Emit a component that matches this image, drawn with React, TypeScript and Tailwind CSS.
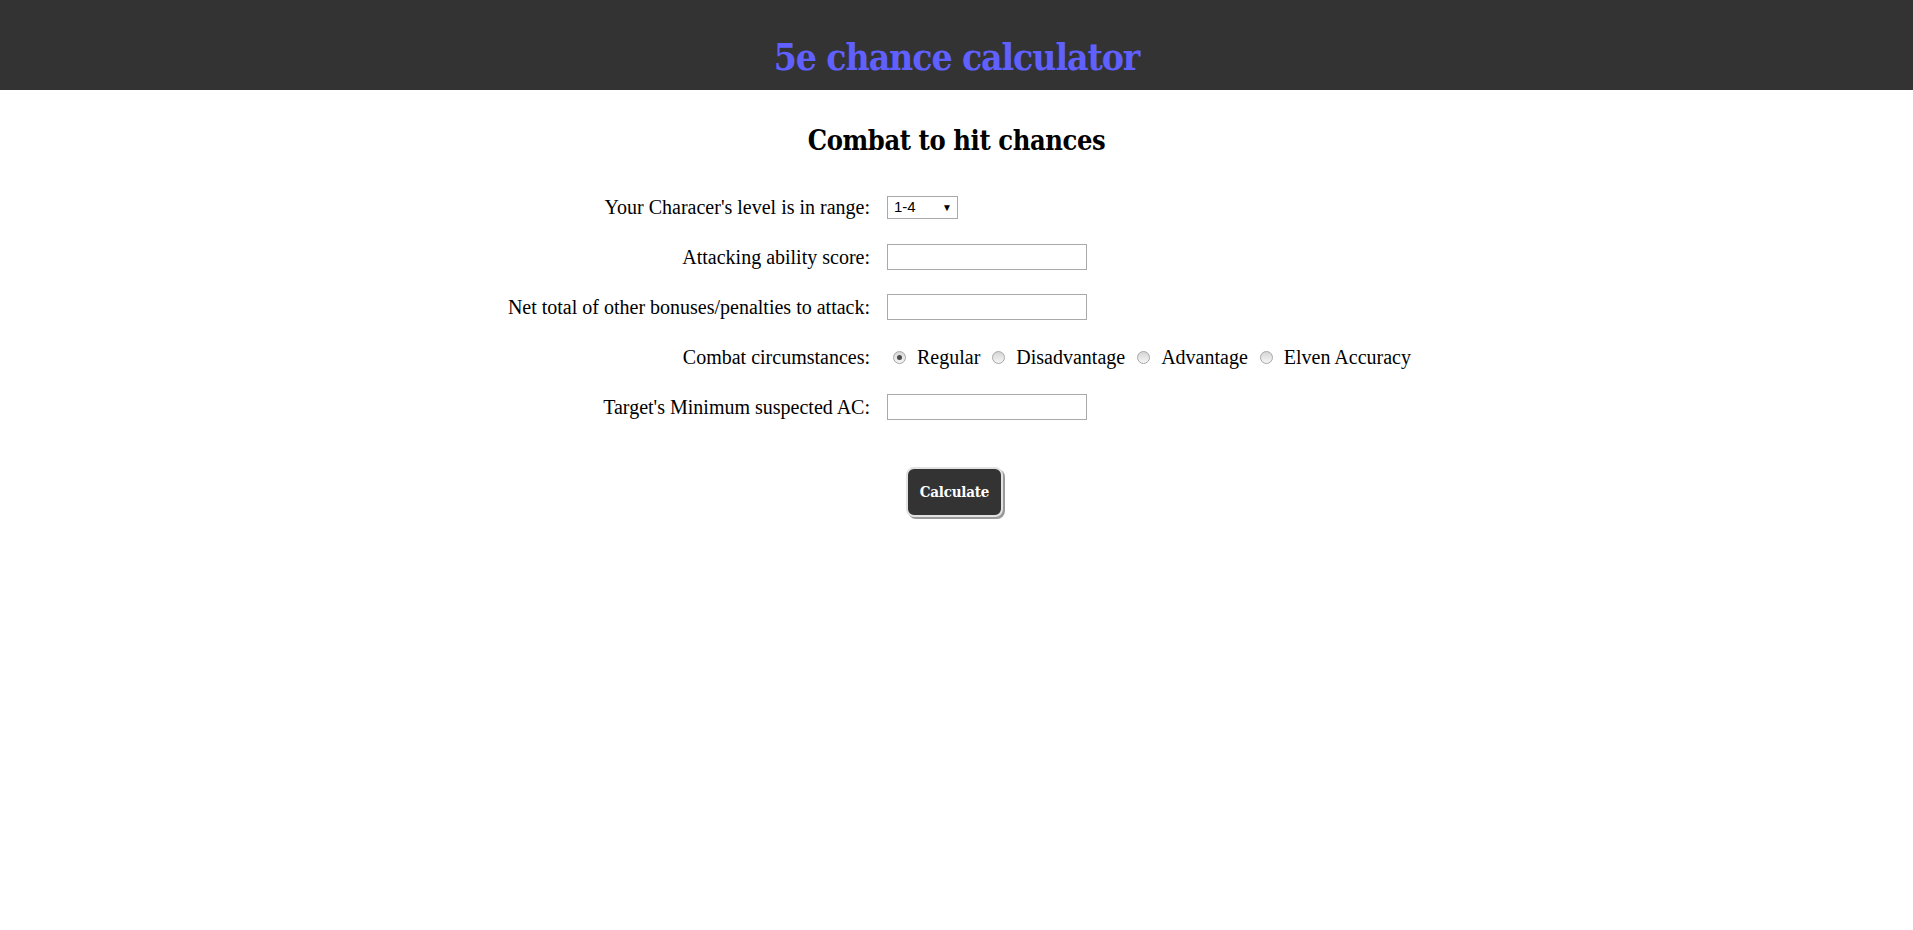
const slab = "font-['DejaVu_Serif',serif] font-bold font-stretch-condensed";
const times = "font-['Liberation_Serif','Times_New_Roman',serif]";

function TextBox() {
    return <div className="w-[200px] h-[26px] border border-[#a9a9a9] bg-white" />;
}

function Radio({ checked }: { checked?: boolean }) {
    return (
        <span className="w-[13px] h-[13px] rounded-full border border-[#a6a6a6] bg-gradient-to-b from-[#d6d6d6] to-[#f6f6f6] flex items-center justify-center shrink-0">
            {checked && <span className="w-[5px] h-[5px] rounded-full bg-[#4a4a4a]" />}
        </span>
    );
}

export default function App() {
    const circumstances = ['Regular', 'Disadvantage', 'Advantage', 'Elven Accuracy'];

    return (
        <div className="min-h-[930px] bg-white">
            {/* Header */}
            <header className="h-[90px] bg-[#333333] flex items-end justify-center pb-[14px]">
                <h1 className={`${slab} text-[37px] leading-none tracking-[-1.1px] text-[#6060ff]`}>5e chance calculator</h1>
            </header>

            <h2 className={`${slab} text-[27px] leading-none tracking-[-0.4px] text-black text-center mt-[37px]`}>Combat to hit chances</h2>

            {/* Form */}
            <div className={`${times} text-[20px] text-black grid grid-cols-[371px_527px] gap-x-[17px] justify-center mt-[28px]`}>
                <div className="h-[50px] flex items-center justify-end">Your Characer's level is in range:</div>
                <div className="h-[50px] flex items-center">
                    <div className="w-[71px] h-[23px] border border-[#a9a9a9] bg-white flex items-center justify-between pl-[6px] pr-[5px] font-['Liberation_Sans',Arial,sans-serif] text-[15px]">
                        <span>1-4</span>
                        <span className="text-[10px]">▼</span>
                    </div>
                </div>

                <div className="h-[50px] flex items-center justify-end">Attacking ability score:</div>
                <div className="h-[50px] flex items-center"><TextBox /></div>

                <div className="h-[50px] flex items-center justify-end">Net total of other bonuses/penalties to attack:</div>
                <div className="h-[50px] flex items-center"><TextBox /></div>

                <div className="h-[50px] flex items-center justify-end">Combat circumstances:</div>
                <div className="h-[50px] flex items-center whitespace-nowrap">
                    {circumstances.map((c, i) => (
                        <label key={c} className={`flex items-center ${i === 0 ? 'ml-[6px]' : 'ml-[12px]'}`}>
                            <Radio checked={i === 0} />
                            <span className="ml-[11px]">{c}</span>
                        </label>
                    ))}
                </div>

                <div className="h-[50px] flex items-center justify-end">Target's Minimum suspected AC:</div>
                <div className="h-[50px] flex items-center"><TextBox /></div>
            </div>

            <div className="flex justify-center mt-[35px] pr-[4px]">
                <button className={`${slab} text-[15px] tracking-[-0.2px] text-white bg-[#333333] rounded-[8px] w-[97px] h-[50px] border-2 border-[#e2e2e2] shadow-[2px_2px_0_#9a9a9a]`}>
                    Calculate
                </button>
            </div>
        </div>
    );
}
